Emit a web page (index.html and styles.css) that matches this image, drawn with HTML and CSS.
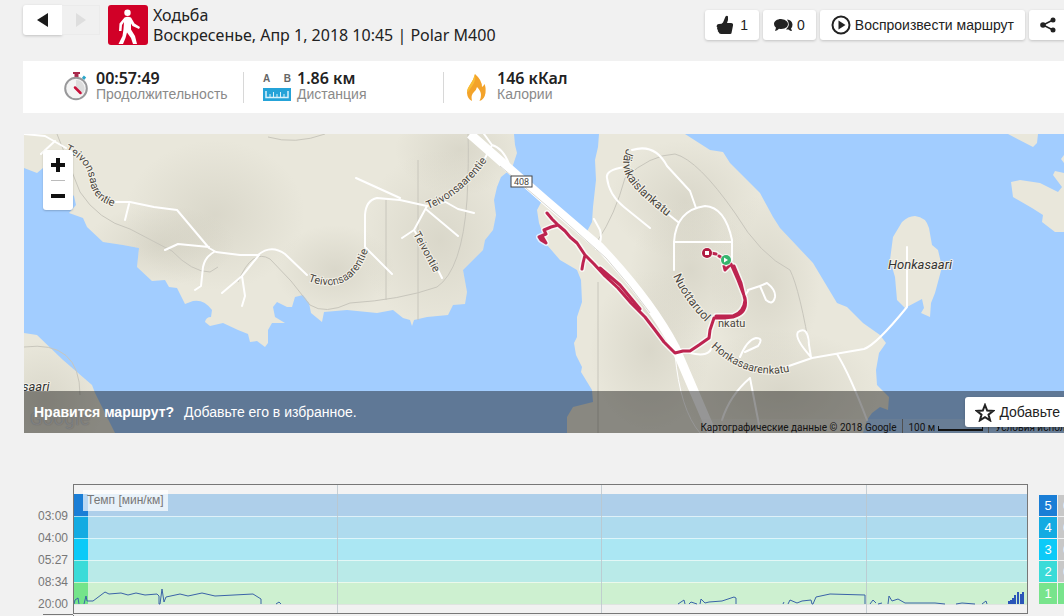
FILE: index.html
```html
<!DOCTYPE html>
<html lang="ru">

<head>
    <meta charset="UTF-8">
    <meta name="viewport" content="width=device-width, initial-scale=1.0">
    <title>Ходьба</title>
    <link rel="stylesheet" href="styles.css">
</head>

<body>
    <div class="page">
        <header class="header">
            <div class="pager">
                <button type="button" class="prev" aria-label="Назад">
                    <svg width="12" height="16" viewBox="0 0 12 16"><path d="M11 1v14L0 8z" fill="#1a1a1a"/></svg>
                </button>
                <button type="button" class="next" aria-label="Вперёд" disabled>
                    <svg width="12" height="16" viewBox="0 0 12 16"><path d="M1 1v14l10-7z" fill="#dedede"/></svg>
                </button>
            </div>
            <svg class="sport" width="40" height="40" viewBox="0 0 40 40">
                <rect width="40" height="40" rx="3" fill="#d10027"/>
                <circle cx="19.500" cy="7.800" r="3.200" fill="#fff"/>
                <path d="M16.500 12.500q3-1.500 6.500 0l3.500 6 5.500 3.500-1 2-6.500-3-1.500-2.500v6l4 6.500 2 8h-4l-2-6-4-5.500-1.500 5.500-2.500 6h-4.500l4-8 1-7 .5-7-2 3-.5 6h-2.500l.5-7.500z" fill="#fff"/>
            </svg>
            <div class="title">
                <div>Ходьба</div>
                <div>Воскресенье, Апр 1, 2018 10:45 | Polar M400</div>
            </div>
            <div class="tools">
                <button type="button" class="btn">
                    <svg width="18" height="20" viewBox="0 0 18 20"><path d="M1 10q-1 1.500.3 2.500-.8 1.500.6 2.500-.6 1.500.8 2.300Q3 19 5 19h9q1.500 0 1.500-1l1.500-7.500Q17.500 8 15 8h-4q1.500-3.500 1-6.500Q11 0 9.500 1.500L7 7.500Q6 9 3 9 1.500 9 1 10z" fill="#222"/></svg>
                    <span>1</span>
                </button>
                <button type="button" class="btn comments">
                    <svg width="19" height="14" viewBox="0 0 19 14"><path d="M13 1.500q5 .5 5.500 5 0 2.500-1.500 4l1 2.500q-2 0-3.500-1.500H12Q17 7 13 1.500z" fill="#222"/><path d="M7 1C3 1 0 3.200 0 6q0 2.300 2 3.700L1 13q2.500-.3 4-2.200 5 .8 8-1.800 2-3 0-5.500Q11 1 7 1z" fill="#222"/></svg>
                    <span>0</span>
                </button>
                <button type="button" class="btn play">
                    <svg width="20" height="20" viewBox="0 0 20 20"><circle cx="10" cy="10" r="8.500" fill="none" stroke="#222" stroke-width="2"/><path d="M7.500 5.500v9l7-4.500z" fill="#222"/></svg>
                    <span>Воспроизвести маршрут</span>
                </button>
                <button type="button" class="btn share" aria-label="Поделиться">
                    <svg width="16" height="16" viewBox="0 0 16 16"><path d="M13 3L3 8l10 5" fill="none" stroke="#222" stroke-width="1.500"/><g fill="#222"><circle cx="13" cy="3" r="2.500"/><circle cx="3" cy="8" r="2.800"/><circle cx="13" cy="13" r="2.500"/></g></svg>
                </button>
            </div>
        </header>

        <section class="stats">
            <div class="stat">
                <svg width="28" height="32" viewBox="0 0 28 32">
                    <path d="M11 0h7v2h-1.500v3h-4V2H11z" fill="#a92a4c"/>
                    <path d="M21 7l2-2.500" stroke="#2ba6c9" stroke-width="3"/>
                    <circle cx="14" cy="16.500" r="10.800" fill="#f4f4f4" stroke="#98989a" stroke-width="2"/>
                    <path d="M14 16.500V8a8.500 8.500 0 0 1 6 14.500z" fill="#dcdcdc"/>
                    <path d="M13 15.500l5.500 5.500" stroke="#c8103a" stroke-width="2.500" stroke-linecap="round"/>
                </svg>
                <div>
                    <strong>00:57:49</strong>
                    <span>Продолжительность</span>
                </div>
            </div>
            <div class="stat">
                <div class="distance">
                    <div class="ab"><span>A</span><span>B</span></div>
                    <svg width="28" height="13" viewBox="0 0 28 13">
                        <rect width="28" height="13" fill="#25a3d8"/>
                        <path d="M3 3v6.500h22V3" fill="none" stroke="#d9f1fb" stroke-width="1.500"/>
                        <path d="M7 9.500V6M10.500 9.500V4M14 9.500V6M17.500 9.500V4M21 9.500V6" fill="none" stroke="#d9f1fb"/>
                    </svg>
                </div>
                <div>
                    <strong>1.86 км</strong>
                    <span>Дистанция</span>
                </div>
            </div>
            <div class="stat">
                <svg width="28" height="32" viewBox="0 0 28 32">
                    <path d="M12 2q-1 5-4.500 10Q4 17 4 21q.5 6 5 8-1.500-6 2-9 2.500-2.500 3-5 4 4 4 8 0 3-1.500 6 5-1.500 6-8 .5-6-1-9-1.500 3-2.500 3Q19 8 12 2z" fill="#f3a32a"/>
                    <path d="M12 2q1 5-1 9-3 5-5 7.500Q4.500 21 4 19q.5-3 3.500-7T12 2z" fill="#f8bd35"/>
                </svg>
                <div>
                    <strong>146 кКал</strong>
                    <span>Калории</span>
                </div>
            </div>
        </section>

        <section class="map">
            <svg class="terrain" viewBox="24 134 1040 299" preserveAspectRatio="xMinYMin slice">
                <defs>
                    <radialGradient id="hill">
                        <stop offset="0" stop-color="#b9b6a6" stop-opacity=".32"/>
                        <stop offset="1" stop-color="#b9b6a6" stop-opacity="0"/>
                    </radialGradient>
                    <path id="land" d="M24 134V168L37 173 43 168 55 180 74 196 76 205 69 213 83 218 87 227 103 242 123 245 139 248 137 267 152 281 165 280 169 287 177 288 185 304 193 301Q204 299 212 310L211 317Q206 317 205 322L210 326 223 323 238 330 248 334 250 342 257 341 265 347 268 343 268 330 272 323 285 323 275 317 273 307 277 302 287 307 292 307 295 297 303 295 309 303 311 313 322 322 324 312 347 310 377 313 393 310 403 318 410 320 412 326 414 320 427 317 448 315 453 305 465 304 467 292 463 270 483 250 485 240 493 230 496 215 494 200 497 187 501 177 512 168 517 153 515 145 514 134z
                        M599 134L598 147 595 160 596 180 593 207 592 222 584 237 560 208 545 195 537 210 539 223 547 245 560 260 577 270 581 280 582 302 577 317 577 337 574 343 576 355 582 367 581 372 592 390 593 402 573 407 567 417V433H863L867 420 872 413 880 407 888 410 889 397 877 385 876 370 879 353 886 343 880 335 863 323 847 307 837 303 813 263 780 228 773 217 760 193 730 163 723 152 710 150 685 134z
                        M915 216Q926 217 929 228L932 245 938 250 942 267 935 293 931 303 930 317 921 313 924 308 922 299 905 308 897 300 895 277 890 260 893 237 902 222Q908 216 915 216z
                        M1011 182L1020 180 1040 183 1058 192 1062 187 1053 175 1055 171 1064 173H1300V232H1055L1042 222 1043 215 1032 208 1013 197z
                        M1008 134L1033 147 1037 143 1038 134z M1064 155L1061 159 1064 163z
                        M24 333L37 335 63 360 92 385 95 393 115 433H24z"/>
                    <clipPath id="landClip"><use href="#land"/></clipPath>
                    <path id="t1" d="M65 151C81 158 88 168 90 182Q93 200 112 206"/>
                    <path id="t2" d="M308 281Q350 297 367 253"/>
                    <path id="t3" d="M428 209Q462 196 488 159"/>
                    <path id="t4" d="M413 234L440 284"/>
                    <path id="t5" d="M627 148C615 176 632 188 675 223"/>
                    <path id="t6" d="M673 276Q686 305 714 330"/>
                    <path id="t7" d="M711 347Q752 386 801 368"/>
                    <path id="route" d="M547 213L552 219 558 225 551 227 544 230 546 234 539 237 541 240 546 243 542 236M558 225L565 231 570 237 577 243 585 255 583 263 582 269M585 255L594 264 605 276 618 288 631 303 645 317 655 330 664 342 675 353 683 351 690 351 699 345 709 338 710 330 714 318 724 318 733 317Q748 313 745 298L738 280 731 264 725 270 724 266M734 266L741 283 745 300Q744 312 733 316L716 316M600 268L620 285 640 309M711 253L716 254M719 256L724 259"/>
                </defs>
                <rect x="24" y="134" width="2000" height="1200" fill="#a2cdff"/>
                <use href="#land" fill="#e9e7db"/>
                <g clip-path="url(#landClip)" fill="url(#hill)">
                    <ellipse cx="215" cy="215" rx="90" ry="75"/>
                    <ellipse cx="335" cy="270" rx="60" ry="45"/>
                    <ellipse cx="440" cy="240" rx="80" ry="90"/>
                    <ellipse cx="460" cy="150" rx="65" ry="45"/>
                    <ellipse cx="160" cy="245" rx="75" ry="40"/>
                    <ellipse cx="685" cy="200" rx="75" ry="60"/>
                    <ellipse cx="765" cy="285" rx="55" ry="90"/>
                    <ellipse cx="650" cy="350" rx="60" ry="80"/>
                    <ellipse cx="780" cy="390" rx="100" ry="60"/>
                    <ellipse cx="45" cy="400" rx="60" ry="60"/>
                    <ellipse cx="690" cy="270" rx="60" ry="70"/>
                </g>
                <!-- paths -->
                <g fill="none" stroke="#c8c6bc">
                    <path d="M57 134L80 192Q98 220 130 229L172 251Q192 272 210 272L218 267M238 282Q252 248 270 259 292 280 310 305 325 315 350 303 400 300 437 287 462 270 467 200 469 160 468 134M268 137Q295 145 325 134M386 200V300M418 160V320"/>
                    <path d="M598 240Q615 215 625 178 650 155 675 154 698 160 735 213 760 255 790 270 800 290 811 357M598 282V433M24 347Q80 340 80 395"/>
                </g>
                <!-- streets -->
                <g fill="none" stroke="#fff" stroke-width="2" stroke-linejoin="round" stroke-linecap="round">
                    <path d="M24 134L45 136 66 148M55 141L41 154M112 202H130L154 207 177 210 209 248 216 252 240 255 258 255Q271 244 285 254L307 275M129 204L125 220M165 250L178 244 209 247M214 252Q205 257 203 267L201 286 195 290M259 255L242 276 222 293M242 276L245 296 242 306"/>
                    <path d="M365 247V215Q366 200 377 198L400 200 427 206 445 202M356 178L400 198M365 247L392 274M427 206L414 230 402 238M427 210L458 236M442 200L458 209 474 213M437 268L442 278M484 160L492 145 484 134M492 145Q503 148 509 164M414 230L420 240"/>
                    <path d="M632 150Q655 143 667 166L690 191 696 208M625 167Q605 170 607 178 609 195 624 207L650 228M668 214L678 222M674 270V242Q676 210 705 206 725 207 732 240V260M675 242H732M594 219L600 230Q603 242 596 249M748 290L760 286M760 286L767 283Q776 290 775 297 773 306 766 300L760 286M744 297L748 291M740 357Q747 340 756 338 764 338 758 346L745 352M811 357Q794 338 798 332 808 325 809 345zM783 368L812 358 835 354 864 349Q876 345 907 307V247M837 354Q850 375 867 420M750 378Q730 395 722 420M750 378L760 430M690 353Q710 358 712 346"/>
                    <path d="M675 354Q680 410 700 433" stroke-width="1"/>
                </g>
                <path d="M470 134L545 200 600 247Q650 300 675 347L712 433" fill="none" stroke="#fff" stroke-width="9"/>
                <path d="M500 166L560 217 606 258Q630 285 650 313" fill="none" stroke="#d9d8d2"/>
                <g class="road-names">
                    <text><textPath href="#t1">Teivonsaarentie</textPath></text>
                    <text><textPath href="#t2">Teivonsaarentie</textPath></text>
                    <text><textPath href="#t3">Teivonsaarentie</textPath></text>
                    <text><textPath href="#t4">Teivontie</textPath></text>
                    <text class="long"><textPath href="#t5">Järvikaislankatu</textPath></text>
                    <text class="long"><textPath href="#t6">Nuottaruol</textPath></text>
                    <text x="718" y="327">nkatu</text>
                    <text><textPath href="#t7">Honkasaarenkatu</textPath></text>
                </g>
                <text class="place" x="888" y="269">Honkasaari</text>
                <text class="place" x="22" y="391">saari</text>
                <rect x="511" y="176" width="21" height="11" fill="#fff" stroke="#444"/>
                <text class="shield" x="514" y="185">408</text>
                <!-- recorded route -->
                <g fill="none" stroke-linejoin="round" stroke-linecap="round">
                    <use href="#route" stroke="#fff" stroke-opacity=".7" stroke-width="6"/>
                    <use href="#route" stroke="#bd2450" stroke-width="3"/>
                </g>
                <circle cx="707" cy="253" r="6" fill="#fff" fill-opacity=".7"/>
                <circle cx="707" cy="253" r="5" fill="#b01a40"/>
                <rect x="705" y="251" width="4" height="4" fill="#fff"/>
                <circle cx="726" cy="260" r="6" fill="#fff" fill-opacity=".7"/>
                <circle cx="726" cy="260" r="5" fill="#35b56d"/>
                <path d="M724 257.500v5l4-2.500z" fill="#fff"/>
            </svg>
            <div class="google">Google</div>
            <div class="credits">
                <span>Картографические данные © 2018 Google</span>
                <span class="scale">100 м <i></i></span>
                <a href="#">Условия исполь</a>
            </div>
            <div class="zoom">
                <button type="button" aria-label="Увеличить"><svg width="14" height="14" viewBox="0 0 14 14"><path d="M7 0v14M0 7h14" stroke="#111" stroke-width="4"/></svg></button>
                <button type="button" aria-label="Уменьшить"><svg width="14" height="14" viewBox="0 0 14 14"><path d="M0 7h14" stroke="#111" stroke-width="4"/></svg></button>
            </div>
            <div class="favourite">
                <p><b>Нравится маршрут?</b>Добавьте его в избранное.</p>
                <button type="button" class="btn">
                    <svg width="20" height="19" viewBox="0 0 20 19"><path d="M10 2l2.200 5.600 6 .3-4.700 3.700 1.600 5.800L10 14.200l-5.100 3.200 1.600-5.800L1.800 7.900l6-.3z" fill="none" stroke="#222" stroke-width="2"/></svg>
                    <span>Добавьте</span>
                </button>
            </div>
        </section>

        <section class="chart">
            <ul class="scale-y">
                <li>03:09</li>
                <li>04:00</li>
                <li>05:27</li>
                <li>08:34</li>
                <li>20:00</li>
            </ul>
            <div class="plot">
                <svg viewBox="74 485 953 128" preserveAspectRatio="none">
                    <rect x="74" y="485" width="953" height="9" fill="#f3f3f3"/>
                    <rect x="74" y="494" width="953" height="22" fill="#aecfea"/>
                    <rect x="74" y="516" width="953" height="22" fill="#aedbee"/>
                    <rect x="74" y="538" width="953" height="22" fill="#abe7f3"/>
                    <rect x="74" y="560" width="953" height="22" fill="#b9eae8"/>
                    <rect x="74" y="582" width="953" height="22" fill="#cdf0d0"/>
                    <rect x="74" y="494" width="14" height="22" fill="#1a7ed6"/>
                    <rect x="74" y="516" width="14" height="22" fill="#13abe2"/>
                    <rect x="74" y="538" width="14" height="22" fill="#0ccaf8"/>
                    <rect x="74" y="560" width="14" height="22" fill="#3adbd8"/>
                    <rect x="74" y="582" width="14" height="22" fill="#74e48a"/>
                    <path d="M74 516.500H1027M74 538.500H1027M74 560.500H1027M74 582.500H1027" stroke="#fff" stroke-opacity=".6"/>
                    <path d="M74 604.500H1027" stroke="#dfe4e0"/>
                    <path d="M337.500 485V613M601.500 485V613M866.500 485V613" stroke="#bcc6cc" stroke-opacity=".8"/>
                    <path class="pace" d="M74 604L75 600 78 598 79 604M84 604L86 596 87 601H93L105 592 109 594 121 593 128 595 136 593 145 595 157 594 159 596V604H160L162 589 164 602 166 597 180 594 188 596 202 593 215 596 253 594 261 599V604M276 604L279 602 281 604M678 604L684 600 685 604M689 604L691 602 697 604M700 604L701 599 705 603 709 602 722 601 734 597 736 598V604M783 604L784 602M788 604L790 600 797 603 802 601 811 600 812 604H813L816 597 830 594 865 595V604M870 604L873 600 876 603M878 604L882 603M888 604L889 596 892 601 898 599 905 603 935 603 945 604M956 604L962 603 975 604M982 604L986 601 987 604"/>
                    <path d="M1009 604V601M1011 604V600M1013 604V598M1015 604V595M1018 604V592M1021 604V594M1023 604V592" fill="none" stroke="#2a55b8" stroke-width="2"/>
                </svg>
                <div class="name">Темп [мин/км]</div>
            </div>
            <table class="zones">
                <tr class="z5"><th>5</th><td>0</td></tr>
                <tr class="z4"><th>4</th><td>0</td></tr>
                <tr class="z3"><th>3</th><td>0</td></tr>
                <tr class="z2"><th>2</th><td>0</td></tr>
                <tr class="z1"><th>1</th><td></td></tr>
            </table>
        </section>
        <div class="next-chart"></div>
    </div>
</body>

</html>
```
FILE: styles.css
```css
* {
    box-sizing: border-box;
    margin: 0;
    padding: 0;
}

body {
    background-color: #f1f1f1;
    color: #222;
    font-family: "Liberation Sans", Arial, sans-serif;
    font-size: 14px;
    overflow: hidden;
}

svg {
    display: block;
    flex: none;
}

button {
    border: 0;
    color: #222;
    font: inherit;
}

.page {
    padding: 5px 0 0 23px;
}

/* header */

.header {
    display: flex;
    align-items: flex-start;
    height: 56px;
}

.pager {
    display: flex;
    margin-right: 8px;
}

.pager button {
    display: flex;
    align-items: center;
    justify-content: center;
    width: 39px;
    height: 30px;
}

.prev {
    background-color: #fff;
    border-radius: 3px 0 0 3px;
    box-shadow: 0 1px 3px rgba(0, 0, 0, .2);
}

.pager .next {
    width: 38px;
    background-color: #f0f0f0;
    border: 1px solid #ebebeb;
    border-left: 0;
}

.title {
    margin-left: 5px;
    font-family: "Noto Sans", sans-serif;
    font-size: 16px;
    line-height: 20px;
    white-space: nowrap;
}

.tools {
    display: flex;
    gap: 4px;
    margin: 5px -3px 0 auto;
}

.btn {
    display: flex;
    align-items: center;
    gap: 6px;
    height: 30px;
    padding: 0 11px;
    background-color: #fff;
    border-radius: 3px;
    box-shadow: 0 1px 3px rgba(0, 0, 0, .2);
    white-space: nowrap;
}

.tools .comments,
.tools .play {
    gap: 4px;
}

/* summary */

.stats {
    display: flex;
    height: 52px;
    padding: 11px 0 10px 20px;
    background-color: #fff;
}

.stat {
    display: flex;
    gap: 6px;
    width: 200px;
    padding-left: 19px;
    white-space: nowrap;
}

.stat + .stat {
    border-left: 1px solid #d8d8d8;
}

.stat strong,
.stat div > span {
    display: block;
}

.stat strong {
    font-family: "Noto Sans", sans-serif;
    font-size: 16px;
    font-weight: 600;
    line-height: 13px;
}

.stat div > span {
    color: #8a8a8a;
    line-height: 18px;
}

.stat .ab {
    display: flex;
    justify-content: space-between;
    padding-bottom: 2px;
}

.stat .ab span {
    color: #666;
    font-size: 10px;
    font-weight: bold;
    line-height: 14px;
}

/* map */

.map {
    position: relative;
    height: 299px;
    margin: 21px 0 0 1px;
    overflow: hidden;
}

.terrain {
    width: 100%;
    height: 100%;
}

.terrain text {
    font-family: Roboto, sans-serif;
    fill: #4a4640;
    stroke: #f3f1e8;
    stroke-width: 2px;
    paint-order: stroke;
}

.road-names text {
    font-size: 11px;
}

.road-names .long {
    font-size: 12px;
}

.terrain .place {
    font-size: 13px;
    font-style: italic;
    fill: #333;
}

.terrain .shield {
    font-size: 9px;
    stroke: none;
}

.google {
    position: absolute;
    left: 6px;
    bottom: 3px;
    color: rgba(255, 255, 255, .6);
    font-family: Roboto, sans-serif;
    font-size: 19px;
    line-height: 22px;
    text-shadow: 0 0 1px #999;
}

.credits {
    position: absolute;
    right: -7px;
    bottom: 0;
    display: flex;
    height: 14px;
    background-color: rgba(245, 245, 245, .2);
    color: #222;
    font-family: Roboto, sans-serif;
    font-size: 10px;
    line-height: 17px;
    white-space: nowrap;
}

.credits .scale {
    display: flex;
    margin: 0 6px;
    padding: 0 5px;
    border: solid #888;
    border-width: 0 1px;
}

.credits i {
    width: 45px;
    height: 5px;
    margin: 7px 0 0 3px;
    border: solid #222;
    border-width: 0 1px 2px;
}

.credits a {
    color: #222;
    text-decoration: none;
}

.zoom {
    position: absolute;
    left: 19px;
    top: 16px;
    width: 30px;
    padding: 0 8px;
    background-color: #fff;
    border-radius: 3px;
    box-shadow: 0 1px 2px rgba(0, 0, 0, .2);
}

.zoom button {
    display: block;
    width: 14px;
    height: 30px;
    background: none;
}

.zoom button + button {
    border-top: 1px solid #bbb;
}

.favourite {
    position: absolute;
    left: 0;
    right: 0;
    bottom: 0;
    display: flex;
    align-items: center;
    justify-content: space-between;
    height: 42px;
    padding-left: 10px;
    background-color: rgba(0, 0, 0, .41);
    color: #fff;
}

.favourite b {
    margin-right: 10px;
}

.favourite .btn {
    gap: 4px;
    margin-right: -10px;
    padding: 0 14px 0 10px;
}

/* pace chart */

.chart {
    display: flex;
    margin-top: 51px;
}

.scale-y {
    width: 50px;
    padding: 21px 5px 0 0;
    background: linear-gradient(#777, #777) right bottom / 30px 1px no-repeat;
    color: #777;
    font-size: 12px;
    line-height: 22px;
    list-style: none;
    text-align: right;
}

.plot {
    position: relative;
    flex: 1;
    height: 130px;
    border: 1px solid #777;
}

.plot svg {
    width: 100%;
    height: 100%;
}

.pace {
    fill: none;
    stroke: #3a63a8;
}

.name {
    position: absolute;
    left: 9px;
    top: 5px;
    padding: 0 4px;
    background-color: rgba(255, 255, 255, .7);
    color: #777;
    font-size: 12px;
    line-height: 21px;
}

.zones {
    height: 111px;
    margin: 10px -17px 0 10px;
    border-spacing: 1px;
    color: #fff;
    font-size: 13px;
}

.zones th {
    width: 18px;
    height: 21px;
    font-weight: normal;
}

.zones td {
    width: 22px;
    padding-left: 5px;
    background-color: #c8c8c8;
}

.z5 th {
    background-color: #1a7ed6;
}

.z4 th {
    background-color: #13abe2;
}

.z3 th {
    background-color: #0ccaf8;
}

.z2 th {
    background-color: #3adbd8;
}

.zones .z1 th,
.zones .z1 td {
    background-color: #78e48c;
}

.next-chart {
    height: 10px;
    margin-left: 50px;
    border-left: 1px solid #777;
}
```
